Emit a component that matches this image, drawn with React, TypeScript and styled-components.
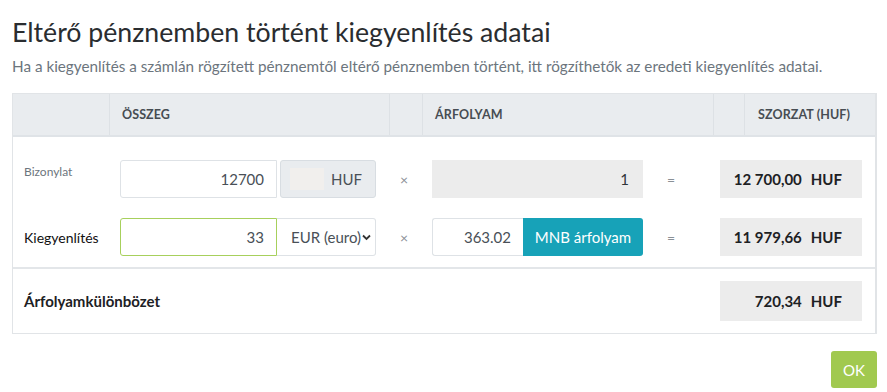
import React from "react";
import styled, { createGlobalStyle } from "styled-components";

const Global = createGlobalStyle`
  html, body { margin: 0; padding: 0; background: #fff; }
  body { font-family: Lato, "Noto Sans", sans-serif; color: #212529; }
  * { box-sizing: border-box; }
`;

const Page = styled.div`
  width: 887px;
  height: 392px;
  padding: 15px 10px 0 12px;
  display: flex;
  flex-direction: column;
`;

const Title = styled.h1`
  margin: 0;
  font-size: 26.7px;
  font-weight: 400;
  line-height: 35px;
  color: #2a2d30;
`;

const Subtitle = styled.p`
  margin: 6px 0 0;
  font-size: 15.25px;
  line-height: 20px;
  color: #6c757d;
`;

const Table = styled.div`
  margin-top: 17px;
  width: 865px;
  border: 1px solid #e1e4e7;
  border-right: 2px solid #e1e4e7;
`;

const HeadRow = styled.div`
  display: grid;
  grid-template-columns: 96px 280px 33px 291px 31px 1fr;
  height: 43px;
  background: #e9ecef;
  border-bottom: 2px solid #dfe3e7;
`;

const HeadCell = styled.div<{ $inset?: number }>`
  display: flex;
  align-items: center;
  padding: 0 0 0 ${(p) => p.$inset ?? 12}px;
  font-size: 12.5px;
  font-weight: 700;
  letter-spacing: 0.1px;
  color: #474d53;
  border-left: 1px solid #dde1e5;
  &:first-child { border-left: none; }
`;

const Body = styled.div`
  padding: 23px 13px 0 11px;
  display: flex;
  flex-direction: column;
  gap: 20px;
`;

const Row = styled.div`
  display: flex;
  align-items: center;
  height: 38px;
`;

const Label = styled.div<{ $muted?: boolean }>`
  width: 84px;
  align-self: ${(p) => (p.$muted ? "flex-start" : "center")};
  margin-top: ${(p) => (p.$muted ? "4px" : "0")};
  font-size: ${(p) => (p.$muted ? "12px" : "14px")};
  color: ${(p) => (p.$muted ? "#6c757d" : "#111")};
`;

const Group = styled.div`
  display: flex;
  width: 256px;
  height: 38px;
  margin-left: 12px;
`;

const AmountInput = styled.div<{ $focus?: boolean }>`
  width: 157px;
  height: 38px;
  display: flex;
  align-items: center;
  justify-content: flex-end;
  padding-right: 12px;
  font-size: 15px;
  color: #495057;
  border: 1px solid ${(p) => (p.$focus ? "#a7d05c" : "#dee2e6")};
  border-radius: 3px 0 0 3px;
  background: #fff;
`;

const Addon = styled.div`
  position: relative;
  flex: 1;
  margin-left: 3px;
  display: flex;
  align-items: center;
  justify-content: flex-end;
  padding-right: 13px;
  font-size: 15px;
  color: #495057;
  background: #e9ecef;
  border: 1px solid #d8dde2;
  border-radius: 3px;
`;

const Ghost = styled.span`
  position: absolute;
  left: 9px;
  top: 7px;
  width: 34px;
  height: 22px;
  background: #f1efed;
`;

const Select = styled.div`
  flex: 1;
  display: flex;
  align-items: center;
  justify-content: space-between;
  padding: 0 4px 0 14px;
  font-size: 15px;
  color: #495057;
  border: 1px solid #dee2e6;
  border-left: none;
  border-radius: 0 3px 3px 0;
`;

const Op = styled.div<{ $w: number }>`
  width: ${(p) => p.$w}px;
  text-align: center;
  font-size: 14px;
  color: #8a9096;
`;

const RateStatic = styled.div`
  width: 211px;
  height: 38px;
  display: flex;
  align-items: center;
  justify-content: flex-end;
  padding-right: 14px;
  font-size: 15px;
  color: #2f3438;
  background: #ececec;
`;

const RateGroup = styled.div`
  width: 211px;
  height: 38px;
  display: flex;
`;

const RateInput = styled.div`
  width: 91px;
  display: flex;
  align-items: center;
  justify-content: flex-end;
  padding-right: 12px;
  font-size: 15px;
  color: #495057;
  border: 1px solid #dee2e6;
  border-right: none;
  border-radius: 3px 0 0 3px;
`;

const MnbButton = styled.button`
  flex: 1;
  border: none;
  border-radius: 0 3px 3px 0;
  background: #17a2b8;
  color: #fff;
  font-family: inherit;
  font-size: 15px;
  padding: 0;
`;

const Result = styled.div<{ $h?: number }>`
  width: 142px;
  height: ${(p) => p.$h ?? 38}px;
  margin-left: auto;
  display: flex;
  align-items: center;
  justify-content: flex-end;
  gap: 9px;
  padding-right: 20px;
  background: #ececec;
  font-size: 15px;
  font-weight: 700;
  color: #1d2124;
`;

const Divider = styled.div`
  margin-top: 11px;
  border-top: 2px solid #e3e6e9;
  padding: 12px 13px 12px 11px;
  display: flex;
  align-items: center;
`;

const TotalLabel = styled.div`
  font-size: 15px;
  font-weight: 700;
  color: #1d2124;
`;

const Footer = styled.div`
  display: flex;
  justify-content: flex-end;
  margin-top: 17px;
`;

const OkButton = styled.button`
  width: 46px;
  height: 37px;
  border: none;
  border-radius: 3px;
  background: #a1c94f;
  color: #fff;
  font-family: inherit;
  font-size: 15px;
  padding: 0;
`;

const Chevron = () => (
  <svg width="9" height="7" viewBox="0 0 9 7">
    <path d="M1 1.5 L4.5 5 L8 1.5" fill="none" stroke="#333" strokeWidth="1.8" />
  </svg>
);

export default function App() {
  return (
    <>
      <Global />
      <Page>
        <Title>Eltérő pénznemben történt kiegyenlítés adatai</Title>
        <Subtitle>
          Ha a kiegyenlítés a számlán rögzített pénznemtől eltérő pénznemben történt, itt rögzíthetők az eredeti kiegyenlítés adatai.
        </Subtitle>
        <Table>
          <HeadRow>
            <HeadCell />
            <HeadCell>ÖSSZEG</HeadCell>
            <HeadCell />
            <HeadCell>ÁRFOLYAM</HeadCell>
            <HeadCell />
            <HeadCell $inset={13}>SZORZAT (HUF)</HeadCell>
          </HeadRow>
          <Body>
            <Row>
              <Label $muted>Bizonylat</Label>
              <Group>
                <AmountInput>12700</AmountInput>
                <Addon>
                  <Ghost />
                  HUF
                </Addon>
              </Group>
              <Op $w={56}>×</Op>
              <RateStatic>1</RateStatic>
              <Op $w={56}>=</Op>
              <Result>
                <span>12 700,00</span>
                <span>HUF</span>
              </Result>
            </Row>
            <Row>
              <Label>Kiegyenlítés</Label>
              <Group>
                <AmountInput $focus>33</AmountInput>
                <Select>
                  <span>EUR (euro)</span>
                  <Chevron />
                </Select>
              </Group>
              <Op $w={56}>×</Op>
              <RateGroup>
                <RateInput>363.02</RateInput>
                <MnbButton>MNB árfolyam</MnbButton>
              </RateGroup>
              <Op $w={56}>=</Op>
              <Result>
                <span>11 979,66</span>
                <span>HUF</span>
              </Result>
            </Row>
          </Body>
          <Divider>
            <TotalLabel>Árfolyamkülönbözet</TotalLabel>
            <Result $h={40}>
              <span>720,34</span>
              <span>HUF</span>
            </Result>
          </Divider>
        </Table>
        <Footer>
          <OkButton>OK</OkButton>
        </Footer>
      </Page>
    </>
  );
}
